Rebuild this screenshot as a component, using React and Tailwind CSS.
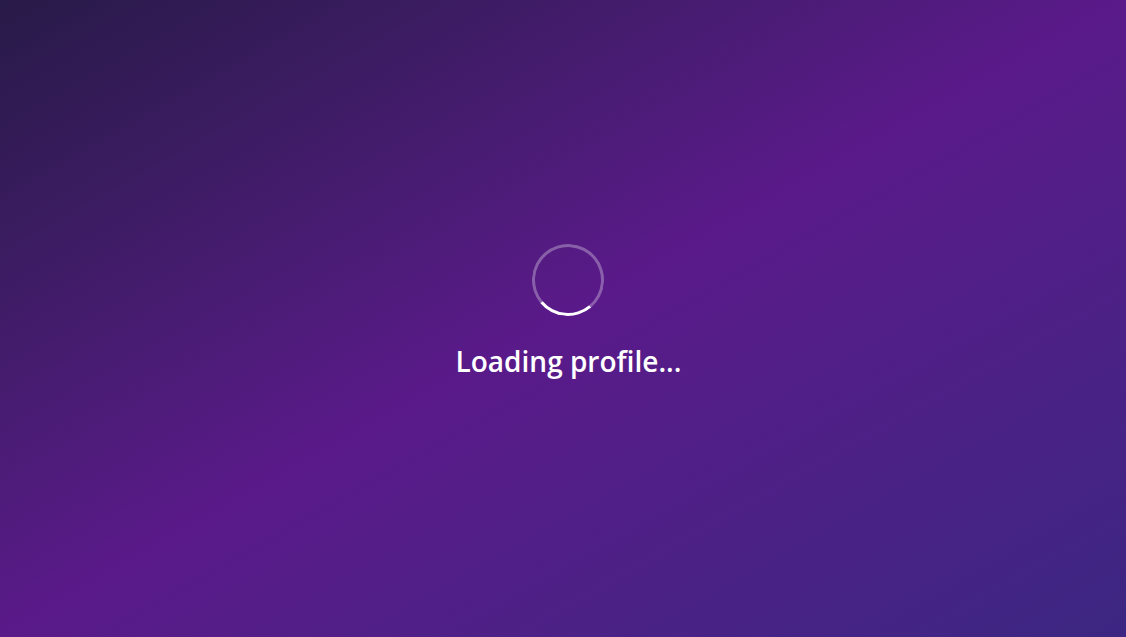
const App = () => {
  return (
    <div className="min-h-screen w-full bg-linear-to-br from-[#281a48] via-[#5a1a8a] to-[#3c2682] flex items-center justify-center font-['Segoe_UI','Open_Sans',sans-serif]">
      <div className="flex flex-col items-center pb-3 ml-[11px]">
        <div className="w-[72px] h-[72px] rounded-full border-[3px] border-white/30 border-b-white rotate-[5deg] mb-6" />
        <p className="text-white text-[28px] font-semibold leading-[42px]">Loading profile...</p>
      </div>
    </div>
  );
};

export default App;
